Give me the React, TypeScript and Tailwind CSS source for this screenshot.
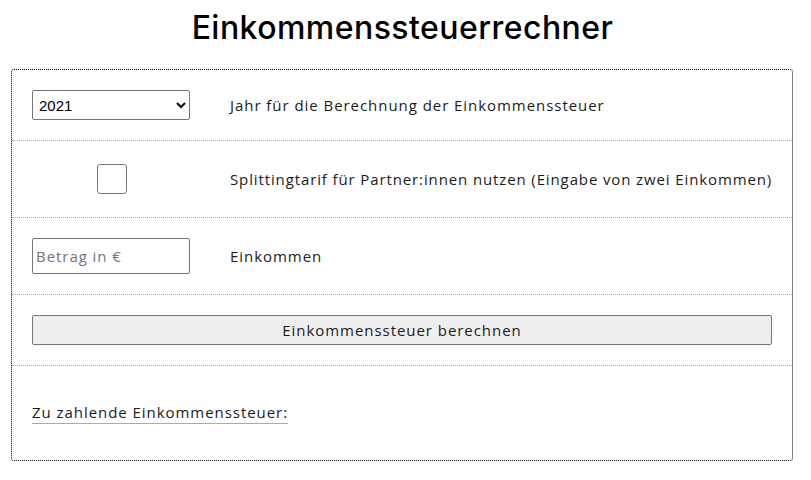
import React, { useState } from "react";

const years = ["2021", "2020", "2019", "2018"];

export default function App() {
  const [year, setYear] = useState("2021");
  const [splitting, setSplitting] = useState(false);
  const [income, setIncome] = useState("");

  return (
    <div className="min-h-screen bg-white text-[#1b1b1b] font-['Open_Sans',sans-serif] text-[15px] tracking-[0.95px]">
      <h1 className="h-[69px] pt-[8px] pr-[6px] text-center font-['Inter',sans-serif] text-[32px] font-medium text-black leading-[40px] tracking-[0.45px]">
        Einkommenssteuerrechner
      </h1>

      <div className="ml-[11px] w-[782px] border border-dotted border-black rounded-[3px]">
        <div className="grid grid-cols-[158px_1fr] gap-10 items-center px-5 py-5 border-b border-dotted border-[#aaa]">
          <select
            value={year}
            onChange={(e) => setYear(e.target.value)}
            className="h-[30px] w-[158px] border border-[#767676] rounded-[2px] bg-white pl-[2px] text-[15px] tracking-normal font-['Liberation_Sans',sans-serif] text-black"
          >
            {years.map((y) => (
              <option key={y}>{y}</option>
            ))}
          </select>
          <span>Jahr für die Berechnung der Einkommenssteuer</span>
        </div>

        <div className="grid grid-cols-[158px_1fr] gap-10 items-center px-5 py-5 border-b border-dotted border-[#aaa]">
          <div className="flex justify-center">
            <input
              type="checkbox"
              checked={splitting}
              onChange={(e) => setSplitting(e.target.checked)}
              className="appearance-none w-[30px] h-[30px] mt-[3px] mb-[3px] ml-[4px] mr-[3px] border border-[#767676] rounded-[3px] bg-white"
            />
          </div>
          <span className="whitespace-nowrap tracking-[0.88px]">
            Splittingtarif für Partner:innen nutzen (Eingabe von zwei Einkommen)
          </span>
        </div>

        <div className="grid grid-cols-[158px_1fr] gap-10 items-center px-5 py-5 border-b border-dotted border-[#aaa]">
          <input
            type="text"
            value={income}
            onChange={(e) => setIncome(e.target.value)}
            placeholder="Betrag in €"
            className="h-[36px] w-[158px] border border-[#767676] rounded-[2px] px-[3px] text-[15px] placeholder:text-[#757575]"
          />
          <span>Einkommen</span>
        </div>

        <div className="px-5 py-5 border-b border-dotted border-[#aaa]">
          <button className="w-full h-[30px] bg-[#efefef] border border-[#767676] rounded-[2px] text-[15px] text-[#1b1b1b]">
            Einkommenssteuer berechnen
          </button>
        </div>

        <div className="px-5 pt-5 pb-5">
          <div className="mt-[16px] mb-4 inline-block border-b border-[#aaa] leading-[21px]">
            Zu zahlende Einkommenssteuer:
          </div>
        </div>
      </div>
    </div>
  );
}
